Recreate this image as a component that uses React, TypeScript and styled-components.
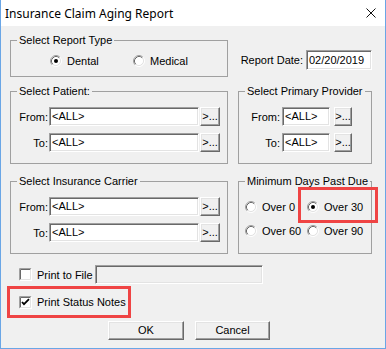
import React from 'react'
import styled, { createGlobalStyle } from 'styled-components'

const GlobalStyle = createGlobalStyle`
  html, body {
    margin: 0;
    padding: 0;
    background: #ffffff;
  }
  body {
    font-family: 'Liberation Sans', Arial, sans-serif;
    font-size: 11px;
    color: #000;
  }
`

const Window = styled.div`
  width: 386px;
  height: 349px;
  box-sizing: border-box;
  border: 1px solid #6aa6e6;
  border-top: none;
  display: flex;
  flex-direction: column;
  background: #f0f0f0;
`

const TitleBar = styled.div`
  height: 26px;
  flex: none;
  background: #ffffff;
  display: flex;
  align-items: center;
  justify-content: space-between;
  padding: 0 9px 0 4px;
  font-family: 'Noto Sans', 'Liberation Sans', sans-serif;
  font-size: 12px;
`

const Body = styled.div`
  flex: 1;
  padding: 8px 13px 0 9px;
  display: flex;
  flex-direction: column;
`

const Row = styled.div<{ $top: number }>`
  display: grid;
  grid-template-columns: 218px 134px;
  column-gap: 10px;
  margin-top: ${(p) => p.$top}px;
`

const Group = styled.fieldset<{ $h: number }>`
  margin: 0;
  padding: 0;
  min-width: 0;
  box-sizing: border-box;
  height: ${(p) => p.$h}px;
  border: 1px solid #a0a0a0;
`

const Legend = styled.legend`
  padding: 0 2px;
  margin-left: 6px;
  line-height: 12px;
  font-size: 11px;
`

const TypeRow = styled.div`
  display: grid;
  grid-template-columns: 83px auto;
  padding-left: 39px;
  margin-top: 8px;
`

const Option = styled.label<{ $mark?: boolean }>`
  position: relative;
  display: flex;
  align-items: center;
  gap: 5px;
  height: 13px;
  white-space: nowrap;

  ${(p) =>
    p.$mark &&
    `
    &::after {
      content: '';
      position: absolute;
      left: -9px;
      top: -13px;
      width: 80px;
      height: 36px;
      box-sizing: border-box;
      border: 3px solid #ef4444;
    }
  `}
`

const DateCell = styled.div`
  display: flex;
  align-items: center;
  justify-content: flex-end;
  gap: 3px;
  margin-top: 16px;
  align-self: start;
`

const Edit = styled.div<{ $w: number; $h?: number; $disabled?: boolean }>`
  width: ${(p) => p.$w}px;
  height: ${(p) => p.$h ?? 19}px;
  box-sizing: border-box;
  background: ${(p) => (p.$disabled ? '#f0f0f0' : '#ffffff')};
  border: 1px solid;
  border-color: #a0a0a0 #ffffff #ffffff #a0a0a0;
  box-shadow: inset 1px 1px 0 #696969, inset -1px -1px 0 #e3e3e3;
  padding: 0 2px;
  display: flex;
  align-items: center;
  line-height: 1;
  white-space: nowrap;
  overflow: hidden;
`

const Picker = styled.div<{ $cols: string; $gap: number; $top: number }>`
  display: grid;
  grid-template-columns: ${(p) => p.$cols};
  column-gap: ${(p) => p.$gap}px;
  row-gap: 7px;
  align-items: center;
  margin-top: ${(p) => p.$top}px;
`

const FieldLabel = styled.span`
  text-align: right;
  white-space: nowrap;
`

const Button = styled.div<{ $w: number; $offset?: number }>`
  width: ${(p) => p.$w}px;
  height: 19px;
  margin-left: ${(p) => p.$offset ?? 0}px;
  box-sizing: border-box;
  background: #f0f0f0;
  border: 1px solid;
  border-color: #ffffff #696969 #696969 #ffffff;
  box-shadow: inset -1px -1px 0 #a0a0a0, inset 1px 1px 0 #e3e3e3;
  display: flex;
  align-items: center;
  justify-content: center;
  line-height: 1;
`

const DaysGrid = styled.div`
  display: grid;
  grid-template-columns: 62px auto;
  row-gap: 11px;
  padding-left: 6px;
  margin-top: 13px;
`

const CheckRow = styled.label`
  display: flex;
  align-items: center;
  height: 19px;
  margin-top: 11px;
  padding-left: 9px;
  white-space: nowrap;
`

const CheckText = styled.span<{ $w?: number }>`
  margin-left: 5px;
  width: ${(p) => (p.$w ? `${p.$w}px` : 'auto')};
`

const Highlight = styled.div`
  width: 124px;
  height: 32px;
  box-sizing: border-box;
  border: 3px solid #ef4444;
  margin: 2px 0 0 -3px;
  padding: 7px 0 0 9px;
  display: flex;
  align-items: flex-start;
`

const ButtonRow = styled.div`
  display: flex;
  gap: 11px;
  margin: 3px 0 0 98px;
`

const Radio = ({ checked }: { checked?: boolean }) => (
  <svg width="12" height="12" viewBox="0 0 12 12">
    <circle cx="6" cy="6" r="4.5" fill="#fff" />
    <path d="M2.11 9.89 A5.5 5.5 0 0 1 9.89 2.11" stroke="#a0a0a0" fill="none" />
    <path d="M9.89 2.11 A5.5 5.5 0 0 1 2.11 9.89" stroke="#ffffff" fill="none" />
    <path d="M2.82 9.18 A4.5 4.5 0 0 1 9.18 2.82" stroke="#696969" fill="none" />
    <path d="M9.18 2.82 A4.5 4.5 0 0 1 2.82 9.18" stroke="#e3e3e3" fill="none" />
    {checked && <circle cx="6" cy="6" r="2" fill="#000" />}
  </svg>
)

const Check = ({ checked }: { checked?: boolean }) => (
  <svg width="13" height="13" viewBox="0 0 13 13">
    <rect x="0" y="0" width="13" height="13" fill="#fff" />
    <path d="M0.5 12.5 V0.5 H12.5" stroke="#a0a0a0" fill="none" />
    <path d="M1.5 11.5 V1.5 H11.5" stroke="#696969" fill="none" />
    <path d="M12.5 0.5 V12.5 H0.5" stroke="#ffffff" fill="none" />
    <path d="M11.5 1.5 V11.5 H1.5" stroke="#e3e3e3" fill="none" />
    {checked && <path d="M3 6 L5 8.2 L10 3.2" stroke="#000" strokeWidth="1.8" fill="none" />}
  </svg>
)

const CloseIcon = () => (
  <svg width="10" height="10" viewBox="0 0 10 10">
    <path d="M0.5 0.5 L9.5 9.5 M9.5 0.5 L0.5 9.5" stroke="#111" strokeWidth="1" />
  </svg>
)

type PickerProps = { wide?: boolean; top: number }

const RangePicker = ({ wide, top }: PickerProps) => {
  const cols = wide ? '37px 150px 20px' : '41px 48px 18px'
  const gap = wide ? 1 : 2
  return (
    <Picker $cols={cols} $gap={gap} $top={top}>
      {['From:', 'To:'].map((label) => (
        <React.Fragment key={label}>
          <FieldLabel>{label}</FieldLabel>
          <Edit $w={wide ? 150 : 48}>&lt;ALL&gt;</Edit>
          <Button $w={wide ? 20 : 18} $offset={wide ? 0 : 2}>
            &gt;...
          </Button>
        </React.Fragment>
      ))}
    </Picker>
  )
}

const App: React.FC = () => (
  <>
    <GlobalStyle />
    <Window>
      <TitleBar>
        <span>Insurance Claim Aging Report</span>
        <CloseIcon />
      </TitleBar>
      <Body>
        <Row $top={0}>
          <Group $h={43}>
            <Legend>Select Report Type</Legend>
            <TypeRow>
              <Option>
                <Radio checked />
                Dental
              </Option>
              <Option>
                <Radio />
                Medical
              </Option>
            </TypeRow>
          </Group>
          <DateCell>
            <span>Report Date:</span>
            <Edit $w={66} $h={20}>02/20/2019</Edit>
          </DateCell>
        </Row>

        <Row $top={8}>
          <Group $h={79}>
            <Legend>Select Patient:</Legend>
            <RangePicker wide top={10} />
          </Group>
          <Group $h={79}>
            <Legend>Select Primary Provider</Legend>
            <RangePicker top={10} />
          </Group>
        </Row>

        <Row $top={11}>
          <Group $h={79}>
            <Legend>Select Insurance Carrier</Legend>
            <RangePicker wide top={10} />
          </Group>
          <Group $h={79}>
            <Legend>Minimum Days Past Due</Legend>
            <DaysGrid>
              <Option>
                <Radio />
                Over 0
              </Option>
              <Option $mark>
                <Radio checked />
                Over 30
              </Option>
              <Option>
                <Radio />
                Over 60
              </Option>
              <Option>
                <Radio />
                Over 90
              </Option>
            </DaysGrid>
          </Group>
        </Row>

        <CheckRow>
          <Check />
          <CheckText $w={58}>Print to File</CheckText>
          <Edit $w={168} $disabled />
        </CheckRow>

        <Highlight>
          <Check checked />
          <CheckText>Print Status Notes</CheckText>
        </Highlight>

        <ButtonRow>
          <Button $w={76}>OK</Button>
          <Button $w={75}>Cancel</Button>
        </ButtonRow>
      </Body>
    </Window>
  </>
)

export default App
